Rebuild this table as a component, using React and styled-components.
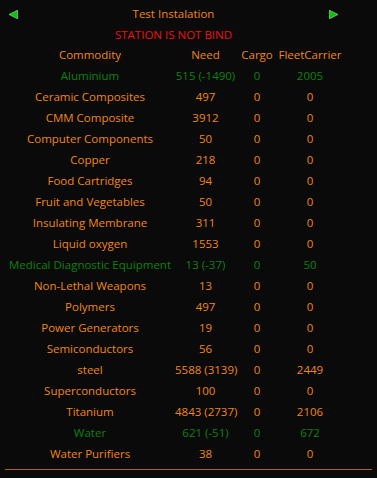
import React from "react";
import styled, { createGlobalStyle } from "styled-components";

const GlobalStyle = createGlobalStyle`
  html, body {
    margin: 0;
    padding: 0;
    background: #0a0a0a;
  }
  body {
    font-family: "Open Sans", "Noto Sans", sans-serif;
    font-size: 11.5px;
  }
`;

const ORANGE = "#f08614";
const GREEN = "#0c820c";

const Page = styled.div`
  width: 377px;
  min-height: 478px;
  padding-top: 4px;
  box-sizing: border-box;
`;

const Panel = styled.div`
  width: 337px;
  margin-left: 5px;
`;

const TitleBar = styled.div`
  display: flex;
  align-items: center;
  justify-content: space-between;
  height: 20px;
  padding: 0 4px;
`;

const Title = styled.div`
  color: ${ORANGE};
  line-height: 20px;
`;

const ArrowButton = styled.button`
  display: flex;
  padding: 0;
  border: 0;
  background: none;
  cursor: pointer;
  width: 9px;
  height: 9px;
`;

const Warning = styled.div`
  color: #f01010;
  text-align: center;
  line-height: 18px;
  margin-top: 2px;
`;

const Row = styled.div`
  display: grid;
  grid-template-columns: 170px 61px 42px 64px;
  height: 21px;
  align-items: center;
  color: ${(p) => (p.$ok ? GREEN : ORANGE)};
`;

const Cell = styled.div`
  text-align: center;
  white-space: nowrap;
`;

const Divider = styled.div`
  margin: 5px 5px 0;
  height: 1px;
  background: #b8600a;
`;

const Arrow = ({ dir }) => (
  <svg width="9" height="9" viewBox="0 0 9 9">
    {dir === "left" ? (
      <polygon points="9,0 9,9 0,4.5" fill="#10c010" stroke="#9be89b" strokeWidth="0.6" />
    ) : (
      <polygon points="0,0 0,9 9,4.5" fill="#10c010" stroke="#9be89b" strokeWidth="0.6" />
    )}
  </svg>
);

const rows = [
  ["Aluminium", "515 (-1490)", "0", "2005", true],
  ["Ceramic Composites", "497", "0", "0"],
  ["CMM Composite", "3912", "0", "0"],
  ["Computer Components", "50", "0", "0"],
  ["Copper", "218", "0", "0"],
  ["Food Cartridges", "94", "0", "0"],
  ["Fruit and Vegetables", "50", "0", "0"],
  ["Insulating Membrane", "311", "0", "0"],
  ["Liquid oxygen", "1553", "0", "0"],
  ["Medical Diagnostic Equipment", "13 (-37)", "0", "50", true],
  ["Non-Lethal Weapons", "13", "0", "0"],
  ["Polymers", "497", "0", "0"],
  ["Power Generators", "19", "0", "0"],
  ["Semiconductors", "56", "0", "0"],
  ["steel", "5588 (3139)", "0", "2449"],
  ["Superconductors", "100", "0", "0"],
  ["Titanium", "4843 (2737)", "0", "2106"],
  ["Water", "621 (-51)", "0", "672", true],
  ["Water Purifiers", "38", "0", "0"],
];

export default function App() {
  return (
    <Page>
      <GlobalStyle />
      <Panel>
        <TitleBar>
          <ArrowButton aria-label="previous">
            <Arrow dir="left" />
          </ArrowButton>
          <Title>Test Instalation</Title>
          <ArrowButton aria-label="next">
            <Arrow dir="right" />
          </ArrowButton>
        </TitleBar>
        <Warning>STATION IS NOT BIND</Warning>
        <Row>
          <Cell>Commodity</Cell>
          <Cell>Need</Cell>
          <Cell>Cargo</Cell>
          <Cell>FleetCarrier</Cell>
        </Row>
        {rows.map(([name, need, cargo, fc, ok]) => (
          <Row key={name} $ok={ok}>
            <Cell>{name}</Cell>
            <Cell>{need}</Cell>
            <Cell>{cargo}</Cell>
            <Cell>{fc}</Cell>
          </Row>
        ))}
      </Panel>
      <Divider />
    </Page>
  );
}
